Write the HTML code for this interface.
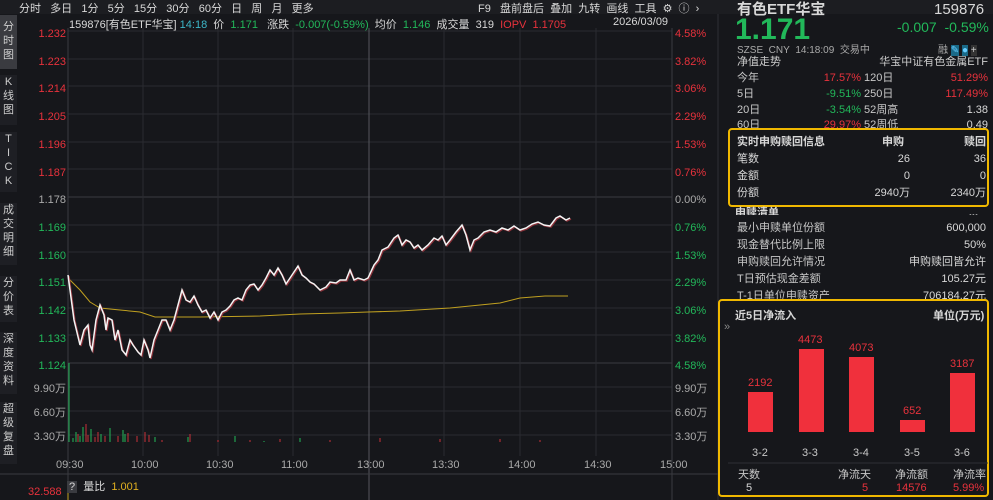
<!DOCTYPE html>
<html><head><meta charset="utf-8"><style>
*{margin:0;padding:0;box-sizing:border-box}
body{width:993px;height:500px;background:#16171b;color:#c8c8c8;font-family:"Liberation Sans","Noto Sans CJK SC",sans-serif;font-size:11px;position:relative;overflow:hidden}
.a{position:absolute;white-space:nowrap}
.r{color:#e8323c}.g{color:#22b85a}.w{color:#d8d8d8}.y{color:#e0b020}.c{color:#3cb6c8}
.side{position:absolute;left:0;width:17px;background:#1e1f24;color:#ccc;font-size:11px;line-height:14px;text-align:center}
.rp{position:absolute;left:732px;width:256px;font-size:11px;height:14px;line-height:14px}
.rp span{position:absolute;top:0;line-height:14px}
</style></head><body>
<div class="a" style="left:0;top:0;width:993px;height:14px;background:#1c1d21"></div>
<div class="a w" style="left:19px;top:0;font-size:11px">分时&nbsp;&nbsp; 多日&nbsp;&nbsp; 1分&nbsp;&nbsp; 5分&nbsp;&nbsp; 15分&nbsp;&nbsp; 30分&nbsp;&nbsp; 60分&nbsp;&nbsp; 日&nbsp;&nbsp; 周&nbsp;&nbsp; 月&nbsp;&nbsp; 更多</div>
<div class="a w" style="left:478px;top:0">F9&nbsp;&nbsp; 盘前盘后&nbsp; 叠加&nbsp; 九转&nbsp; 画线&nbsp; 工具&nbsp; ⚙&nbsp; ⓘ&nbsp; ›</div>
<div class="side" style="top:15px;height:54px;background:#3a3b40;padding-top:5px">分<br>时<br>图</div>
<div class="side" style="top:75px;height:50px">K<br>线<br>图</div>
<div class="side" style="top:132px;height:60px">T<br>I<br>C<br>K</div>
<div class="side" style="top:203px;height:62px">成<br>交<br>明<br>细</div>
<div class="side" style="top:276px;height:46px">分<br>价<br>表</div>
<div class="side" style="top:332px;height:62px">深<br>度<br>资<br>料</div>
<div class="side" style="top:402px;height:62px">超<br>级<br>复<br>盘</div>
<div class="a w" style="left:69px;top:16px">159876[有色ETF华宝] <span class="c">14:18</span>&nbsp; 价&nbsp; <span class="g">1.171</span>&nbsp;&nbsp; 涨跌&nbsp; <span class="g">-0.007(-0.59%)</span>&nbsp; 均价&nbsp; <span class="g">1.146</span>&nbsp; 成交量&nbsp; 319&nbsp; <span class="r">IOPV&nbsp; 1.1705</span></div>
<div class="a w" style="left:613px;top:16px">2026/03/09</div>
<svg class="a" style="left:0;top:0" width="993" height="500">
<g stroke="#2a2b30" stroke-width="1">
<line x1="68" y1="31" x2="672" y2="31"/><line x1="68" y1="197" x2="672" y2="197" stroke="#3a3b40"/><line x1="68" y1="363" x2="672" y2="363" stroke="#3a3b40"/>
<line x1="68" y1="59" x2="672" y2="59"/><line x1="68" y1="86" x2="672" y2="86"/><line x1="68" y1="114" x2="672" y2="114"/><line x1="68" y1="142" x2="672" y2="142"/><line x1="68" y1="169" x2="672" y2="169"/><line x1="68" y1="225" x2="672" y2="225"/><line x1="68" y1="252" x2="672" y2="252"/><line x1="68" y1="280" x2="672" y2="280"/><line x1="68" y1="308" x2="672" y2="308"/><line x1="68" y1="335" x2="672" y2="335"/><line x1="68" y1="387" x2="672" y2="387"/><line x1="68" y1="411" x2="672" y2="411"/><line x1="68" y1="435" x2="672" y2="435"/>
<line x1="143" y1="28" x2="143" y2="456"/><line x1="218" y1="28" x2="218" y2="456"/><line x1="293" y1="28" x2="293" y2="456"/><line x1="444" y1="28" x2="444" y2="456"/><line x1="520" y1="28" x2="520" y2="456"/><line x1="596" y1="28" x2="596" y2="456"/>
<line x1="369" y1="28" x2="369" y2="500" stroke="#55565c"/><line x1="68" y1="28" x2="68" y2="500" stroke="#3a3b40"/><line x1="672" y1="28" x2="672" y2="500" stroke="#3a3b40"/>
<line x1="0" y1="474" x2="718" y2="474" stroke="#3a3b40"/>
</g>
<line x1="718" y1="14" x2="718" y2="500" stroke="#2e2f34"/>
<polyline fill="none" stroke="#c0a020" stroke-width="1" points="68,278 80,290 90,302 100,308 120,310 140,312 155,317 170,317 200,317 260,316 300,314 340,313 368,312 400,311 450,308 500,303 520,298 545,296 568,296"/>
<polyline fill="none" stroke="#8a3038" stroke-width="1.5" transform="translate(1,1)" points="68,275 70,290 74,320 80,345 84,330 88,325 90,345 92,350 96,320 100,305 104,315 106,330 108,318 112,320 115,340 118,330 122,350 126,355 130,340 133,345 138,352 141,355 144,340 148,350 150,358 154,340 158,330 162,320 166,320 170,330 174,320 178,305 182,290 186,300 190,302 194,296 198,305 202,312 206,310 210,318 214,312 218,320 222,312 226,310 230,306 234,300 238,298 242,300 246,290 250,285 254,284 258,290 262,285 266,278 270,270 274,275 278,268 282,275 286,284 290,278 294,272 298,266 302,275 306,278 310,282 314,284 320,290 326,287 330,282 336,283 340,280 346,280 350,270 354,280 358,278 364,280 368,278 374,265 378,260 382,250 388,247 394,238 398,235 402,245 406,240 410,242 414,248 418,245 422,250 428,245 434,238 438,240 442,236 446,245 450,240 456,232 462,225 466,235 470,250 474,240 478,238 484,232 490,230 496,232 502,228 508,230 514,226 520,230 526,228 532,224 538,222 544,225 550,226 556,218 560,216 566,220 570,218"/>
<polyline fill="none" stroke="#f4f4f4" stroke-width="1.5" points="68,275 70,290 74,320 80,345 84,330 88,325 90,345 92,350 96,320 100,305 104,315 106,330 108,318 112,320 115,340 118,330 122,350 126,355 130,340 133,345 138,352 141,355 144,340 148,350 150,358 154,340 158,330 162,320 166,320 170,330 174,320 178,305 182,290 186,300 190,302 194,296 198,305 202,312 206,310 210,318 214,312 218,320 222,312 226,310 230,306 234,300 238,298 242,300 246,290 250,285 254,284 258,290 262,285 266,278 270,270 274,275 278,268 282,275 286,284 290,278 294,272 298,266 302,275 306,278 310,282 314,284 320,290 326,287 330,282 336,283 340,280 346,280 350,270 354,280 358,278 364,280 368,278 374,265 378,260 382,250 388,247 394,238 398,235 402,245 406,240 410,242 414,248 418,245 422,250 428,245 434,238 438,240 442,236 446,245 450,240 456,232 462,225 466,235 470,250 474,240 478,238 484,232 490,230 496,232 502,228 508,230 514,226 520,230 526,228 532,224 538,222 544,225 550,226 556,218 560,216 566,220 570,218"/>
<g stroke-width="1">
<line x1="69" y1="363" x2="69" y2="442" stroke="#22b85a"/>
<path stroke="#22b85a" d="M73 438V442M76 432V442M80 436V442M83 427V442M91 429V442M101 434V442M110 428V442M123 430V442M125 434V442M155 437V442M188 437V442M235 436V442M264 441V442M300 438V442"/>
<path stroke="#c8323a" d="M78 434V442M86 424V442M88 435V442M95 437V442M98 432V442M105 436V442M118 436V442M128 433V442M137 436V442M145 432V442M149 435V442M162 440V442M190 434V442M218 440V442M250 440V442M280 439V442M330 440V442M380 438V442M440 439V442M500 439V442M540 440V442"/>
</g>
<line x1="68" y1="485" x2="68" y2="500" stroke="#c0a020"/>
<rect x="729" y="129" width="259" height="77" fill="none" stroke="#f0b800" stroke-width="2" rx="3"/>
<rect x="719" y="300" width="269" height="196" fill="none" stroke="#f0b800" stroke-width="2" rx="3"/>
<g fill="#f0303c">
<rect x="748" y="392" width="25" height="40"/><rect x="799" y="349" width="25" height="83"/><rect x="849" y="357" width="25" height="75"/><rect x="900" y="420" width="25" height="12"/><rect x="950" y="373" width="25" height="59"/>
</g>
<line x1="728" y1="463" x2="988" y2="463" stroke="#2e2f34"/>
</svg>
<div class="a" style="left:22px;top:21px;width:44px;text-align:right;line-height:27.7px;font-size:11px">
<div class="r">1.232</div><div class="r">1.223</div><div class="r">1.214</div><div class="r">1.205</div><div class="r">1.196</div><div class="r">1.187</div><div style="color:#aaa">1.178</div><div class="g">1.169</div><div class="g">1.160</div><div class="g">1.151</div><div class="g">1.142</div><div class="g">1.133</div><div class="g">1.124</div></div>
<div class="a" style="left:22px;top:377px;width:44px;text-align:right;line-height:24px;color:#aaa"><div>9.90万</div><div>6.60万</div><div>3.30万</div></div>
<div class="a" style="left:675px;top:21px;line-height:27.7px;font-size:11px">
<div class="r">4.58%</div><div class="r">3.82%</div><div class="r">3.06%</div><div class="r">2.29%</div><div class="r">1.53%</div><div class="r">0.76%</div><div style="color:#aaa">0.00%</div><div class="g">0.76%</div><div class="g">1.53%</div><div class="g">2.29%</div><div class="g">3.06%</div><div class="g">3.82%</div><div class="g">4.58%</div></div>
<div class="a" style="left:675px;top:377px;line-height:24px;color:#aaa"><div>9.90万</div><div>6.60万</div><div>3.30万</div></div>
<div class="a" style="top:459px;left:56px;color:#aaa">09:30</div>
<div class="a" style="top:459px;left:131px;color:#aaa">10:00</div>
<div class="a" style="top:459px;left:206px;color:#aaa">10:30</div>
<div class="a" style="top:459px;left:281px;color:#aaa">11:00</div>
<div class="a" style="top:459px;left:357px;color:#aaa">13:00</div>
<div class="a" style="top:459px;left:432px;color:#aaa">13:30</div>
<div class="a" style="top:459px;left:508px;color:#aaa">14:00</div>
<div class="a" style="top:459px;left:584px;color:#aaa">14:30</div>
<div class="a" style="top:459px;left:660px;color:#aaa">15:00</div>
<div class="a r" style="left:28px;top:486px">32.588</div>
<div class="a w" style="left:67px;top:478px"><span style="background:#3a3b40;padding:0 2px">?</span>&nbsp; 量比&nbsp; <span class="y">1.001</span></div>
<div class="a w" style="left:737px;top:1px;font-size:15px;font-weight:bold;line-height:18px">有色ETF华宝</div>
<div class="a w" style="left:934px;top:1px;font-size:15px;line-height:18px">159876</div>
<div class="a g" style="left:735px;top:16px;font-size:30px;font-weight:bold;line-height:28px">1.171</div>
<div class="a g" style="left:897px;top:19px;font-size:14px">-0.007&nbsp; -0.59%</div>
<div class="a" style="left:737px;top:41px;font-size:10px;color:#aaa">SZSE&nbsp; CNY&nbsp; 14:18:09&nbsp; 交易中</div>
<div class="a" style="left:938px;top:41px;font-size:10px;color:#aaa">融 <span style="background:#1a6a88;color:#6cf">✎</span> <span style="background:#1a6a88;color:#6cf">●</span> <span style="background:#333;color:#ccc">+</span></div>
<div class="rp" style="top:55px;color:#ccc"><span style="left:5px">净值走势</span><span style="right:0">华宝中证有色金属ETF</span></div>
<div class="rp" style="top:71px"><span style="left:5px">今年</span><span class="r" style="left:77px;width:52px;text-align:right">17.57%</span><span style="left:132px">120日</span><span class="r" style="right:0">51.29%</span></div>
<div class="rp" style="top:87px"><span style="left:5px">5日</span><span class="g" style="left:77px;width:52px;text-align:right">-9.51%</span><span style="left:132px">250日</span><span class="r" style="right:0">117.49%</span></div>
<div class="rp" style="top:103px"><span style="left:5px">20日</span><span class="g" style="left:77px;width:52px;text-align:right">-3.54%</span><span style="left:132px">52周高</span><span class="w" style="right:0">1.38</span></div>
<div class="rp" style="top:118px;height:10px;overflow:hidden"><span style="left:5px">60日</span><span class="r" style="left:77px;width:52px;text-align:right">29.97%</span><span style="left:132px">52周低</span><span class="w" style="right:0">0.49</span></div>
<div class="rp w" style="top:135px;font-weight:bold"><span style="left:5px">实时申购赎回信息</span><span style="left:150px">申购</span><span style="right:2px">赎回</span></div>
<div class="rp w" style="top:152px"><span style="left:5px">笔数</span><span style="left:150px;width:28px;text-align:right">26</span><span style="right:2px">36</span></div>
<div class="rp w" style="top:169px"><span style="left:5px">金额</span><span style="left:150px;width:28px;text-align:right">0</span><span style="right:2px">0</span></div>
<div class="rp w" style="top:186px"><span style="left:5px">份额</span><span style="left:130px;width:48px;text-align:right">2940万</span><span style="right:2px">2340万</span></div>
<div class="rp w" style="top:206px;height:9px;overflow:hidden;font-weight:bold"><span style="left:3px">申赎清单</span><span style="right:10px">...</span></div>
<div class="rp" style="top:221px"><span style="left:5px">最小申赎单位份额</span><span class="w" style="right:2px">600,000</span></div>
<div class="rp" style="top:238px"><span style="left:5px">现金替代比例上限</span><span class="w" style="right:2px">50%</span></div>
<div class="rp" style="top:255px"><span style="left:5px">申购赎回允许情况</span><span class="w" style="right:2px">申购赎回皆允许</span></div>
<div class="rp" style="top:272px"><span style="left:5px">T日预估现金差额</span><span class="w" style="right:2px">105.27元</span></div>
<div class="rp" style="top:289px;height:10px;overflow:hidden"><span style="left:5px">T-1日单位申赎资产</span><span class="w" style="right:2px">706184.27元</span></div>
<div class="a w" style="left:735px;top:307px;font-weight:bold">近5日净流入</div>
<div class="a w" style="left:933px;top:307px;font-weight:bold">单位(万元)</div>
<div class="a" style="left:724px;top:321px;color:#888">»</div>
<div class="a r" style="left:748px;top:377px;font-size:11px">2192</div>
<div class="a r" style="left:798px;top:334px">4473</div>
<div class="a r" style="left:849px;top:342px">4073</div>
<div class="a r" style="left:903px;top:405px">652</div>
<div class="a r" style="left:950px;top:358px">3187</div>
<div class="a" style="left:752px;top:447px">3-2</div>
<div class="a" style="left:802px;top:447px">3-3</div>
<div class="a" style="left:853px;top:447px">3-4</div>
<div class="a" style="left:904px;top:447px">3-5</div>
<div class="a" style="left:954px;top:447px">3-6</div>
<div class="a" style="left:738px;top:466px">天数</div>
<div class="a" style="left:838px;top:466px">净流天</div>
<div class="a" style="left:895px;top:466px">净流额</div>
<div class="a" style="left:953px;top:466px">净流率</div>
<div class="a w" style="left:746px;top:482px">5</div>
<div class="a r" style="left:862px;top:482px">5</div>
<div class="a r" style="left:896px;top:482px">14576</div>
<div class="a r" style="left:953px;top:482px">5.99%</div>
</body></html>
